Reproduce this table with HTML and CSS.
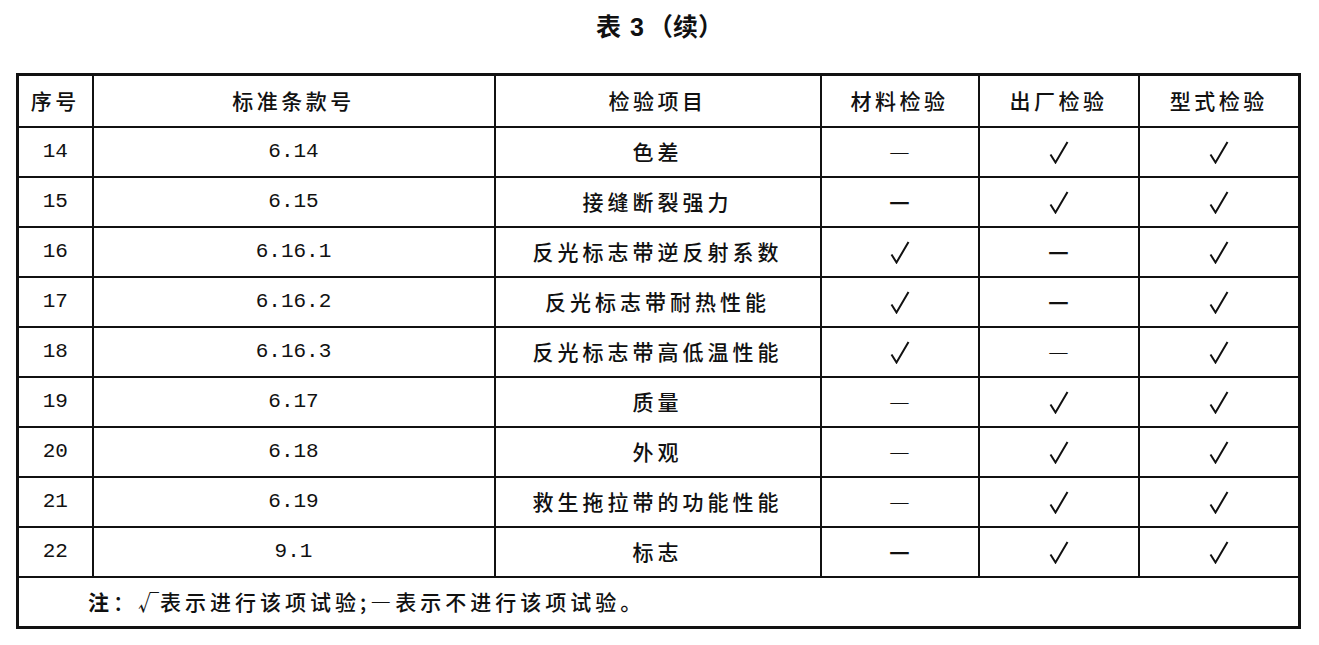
FILE: index.html
```html
<!DOCTYPE html>
<html lang="zh-CN">
<head>
<meta charset="utf-8">
<title>表 3（续）</title>
<link rel="stylesheet" href="styles.css">
</head>
<body>
<div class="page">
  <h1 class="title">表<span class="num">3</span>（续）</h1>
  <table class="spec">
    <colgroup>
      <col class="c-no">
      <col class="c-clause">
      <col class="c-item">
      <col class="c-mat">
      <col class="c-fac">
      <col class="c-type">
    </colgroup>
    <thead>
      <tr class="head">
        <th>序号</th>
        <th>标准条款号</th>
        <th>检验项目</th>
        <th>材料检验</th>
        <th>出厂检验</th>
        <th>型式检验</th>
      </tr>
    </thead>
    <tbody>
      <tr><td class="num">14</td><td class="num">6.14</td><td>色差</td><td><span class="dash">—</span></td><td><svg class="chk" viewBox="0 0 20 23" role="img" aria-label="√"><path d="M1.5 13.5 L6.5 21.5 L18.5 1"/></svg></td><td><svg class="chk" viewBox="0 0 20 23" role="img" aria-label="√"><path d="M1.5 13.5 L6.5 21.5 L18.5 1"/></svg></td></tr>
      <tr><td class="num">15</td><td class="num">6.15</td><td>接缝断裂强力</td><td><span class="dash bold">—</span></td><td><svg class="chk" viewBox="0 0 20 23" role="img" aria-label="√"><path d="M1.5 13.5 L6.5 21.5 L18.5 1"/></svg></td><td><svg class="chk" viewBox="0 0 20 23" role="img" aria-label="√"><path d="M1.5 13.5 L6.5 21.5 L18.5 1"/></svg></td></tr>
      <tr><td class="num">16</td><td class="num">6.16.1</td><td>反光标志带逆反射系数</td><td><svg class="chk" viewBox="0 0 20 23" role="img" aria-label="√"><path d="M1.5 13.5 L6.5 21.5 L18.5 1"/></svg></td><td><span class="dash bold">—</span></td><td><svg class="chk" viewBox="0 0 20 23" role="img" aria-label="√"><path d="M1.5 13.5 L6.5 21.5 L18.5 1"/></svg></td></tr>
      <tr><td class="num">17</td><td class="num">6.16.2</td><td>反光标志带耐热性能</td><td><svg class="chk" viewBox="0 0 20 23" role="img" aria-label="√"><path d="M1.5 13.5 L6.5 21.5 L18.5 1"/></svg></td><td><span class="dash bold">—</span></td><td><svg class="chk" viewBox="0 0 20 23" role="img" aria-label="√"><path d="M1.5 13.5 L6.5 21.5 L18.5 1"/></svg></td></tr>
      <tr><td class="num">18</td><td class="num">6.16.3</td><td>反光标志带高低温性能</td><td><svg class="chk" viewBox="0 0 20 23" role="img" aria-label="√"><path d="M1.5 13.5 L6.5 21.5 L18.5 1"/></svg></td><td><span class="dash">—</span></td><td><svg class="chk" viewBox="0 0 20 23" role="img" aria-label="√"><path d="M1.5 13.5 L6.5 21.5 L18.5 1"/></svg></td></tr>
      <tr><td class="num">19</td><td class="num">6.17</td><td>质量</td><td><span class="dash">—</span></td><td><svg class="chk" viewBox="0 0 20 23" role="img" aria-label="√"><path d="M1.5 13.5 L6.5 21.5 L18.5 1"/></svg></td><td><svg class="chk" viewBox="0 0 20 23" role="img" aria-label="√"><path d="M1.5 13.5 L6.5 21.5 L18.5 1"/></svg></td></tr>
      <tr><td class="num">20</td><td class="num">6.18</td><td>外观</td><td><span class="dash">—</span></td><td><svg class="chk" viewBox="0 0 20 23" role="img" aria-label="√"><path d="M1.5 13.5 L6.5 21.5 L18.5 1"/></svg></td><td><svg class="chk" viewBox="0 0 20 23" role="img" aria-label="√"><path d="M1.5 13.5 L6.5 21.5 L18.5 1"/></svg></td></tr>
      <tr><td class="num">21</td><td class="num">6.19</td><td>救生拖拉带的功能性能</td><td><span class="dash">—</span></td><td><svg class="chk" viewBox="0 0 20 23" role="img" aria-label="√"><path d="M1.5 13.5 L6.5 21.5 L18.5 1"/></svg></td><td><svg class="chk" viewBox="0 0 20 23" role="img" aria-label="√"><path d="M1.5 13.5 L6.5 21.5 L18.5 1"/></svg></td></tr>
      <tr><td class="num">22</td><td class="num">9.1</td><td>标志</td><td><span class="dash bold">—</span></td><td><svg class="chk" viewBox="0 0 20 23" role="img" aria-label="√"><path d="M1.5 13.5 L6.5 21.5 L18.5 1"/></svg></td><td><svg class="chk" viewBox="0 0 20 23" role="img" aria-label="√"><path d="M1.5 13.5 L6.5 21.5 L18.5 1"/></svg></td></tr>
    </tbody>
    <tfoot>
      <tr class="note">
        <td colspan="6"><b>注</b>：<span class="mark">√</span>表示进行该项试验;—表示不进行该项试验。</td>
      </tr>
    </tfoot>
  </table>
</div>
</body>
</html>
```
FILE: styles.css
```css
html, body {
  margin: 0;
  padding: 0;
  background: #ffffff;
}
body {
  font-family: "Noto Sans CJK SC", "Noto Sans", sans-serif;
  color: #111111;
}
.page {
  width: 1319px;
  height: 645px;
  padding-top: 9px;
  box-sizing: border-box;
}
.title {
  margin: 0;
  height: 32px;
  line-height: 32px;
  font-size: 25px;
  font-weight: 700;
  text-align: center;
  letter-spacing: 0;
}
.title .num {
  font-family: "Liberation Sans", sans-serif;
  font-weight: 700;
  margin: 0 4px 0 9px;
}
.spec {
  margin-top: 32px;
  margin-left: 16px;
  width: 1285px;
  table-layout: fixed;
  border-collapse: collapse;
  border: 3px solid #111111;
}
.c-no { width: 75px; }
.c-clause { width: 402px; }
.c-item { width: 326px; }
.c-mat { width: 158px; }
.c-fac { width: 160px; }
.c-type { width: 161px; }

.spec th,
.spec td {
  border: 2px solid #111111;
  padding: 0;
  text-align: center;
  vertical-align: middle;
  font-size: 21px;
  font-weight: 500;
  letter-spacing: 4px;
  line-height: 24px;
}
.spec th:nth-child(2),
.spec td:nth-child(2) {
  border-right-width: 1px;
}
.spec tr.head th {
  height: 47px;
  letter-spacing: 3.5px;
  padding-bottom: 3px;
}
.spec tbody td {
  height: 45px;
  padding-bottom: 3px;
}
.spec td.num {
  font-family: "Liberation Mono", monospace;
  font-size: 21px;
  font-weight: 400;
  letter-spacing: 0;
  padding-bottom: 1px;
  height: 47px;
}
.chk {
  display: inline-block;
  vertical-align: middle;
  width: 20px;
  height: 23px;
  margin-top: 2px;
}
.chk path {
  fill: none;
  stroke: #111111;
  stroke-width: 2;
  stroke-linejoin: miter;
  stroke-linecap: butt;
}
.dash {
  font-family: "Noto Sans CJK SC", sans-serif;
  font-size: 23px;
  font-weight: 300;
  letter-spacing: 0;
}
.dash.bold {
  font-weight: 700;
}
.spec tr.note td {
  height: 46px;
  padding-bottom: 2px;
  text-align: left;
  padding-left: 69px;
  letter-spacing: 4px;
  font-weight: 500;
}
.spec tr.note b {
  font-weight: 700;
}
.mark {
  letter-spacing: 1px;
}
```
